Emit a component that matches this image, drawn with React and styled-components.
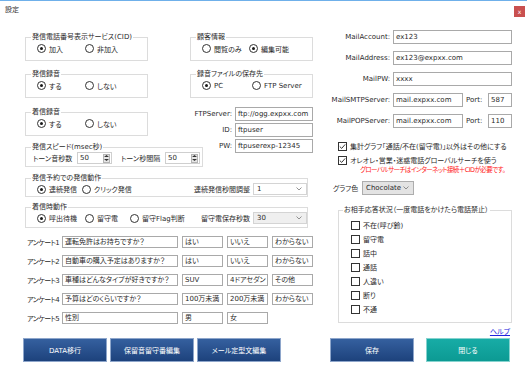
import React from 'react';
import styled, { createGlobalStyle } from 'styled-components';

const GlobalStyle = createGlobalStyle`
  html, body { margin: 0; padding: 0; background: #fff; }
  body {
    font-family: "DejaVu Sans", "Noto Sans CJK JP", sans-serif;
    font-size: 7px;
    color: #2a2a2a;
    font-feature-settings: "palt";
  }
  * { box-sizing: border-box; }
`;

const Window = styled.div`
  width: 527px;
  height: 371px;
  border-top: 1px solid #6fb0ea;
  background: #fff;
  overflow: hidden;
  display: flex;
  flex-direction: column;
`;

const TitleBar = styled.div`
  height: 28px;
  display: flex;
  justify-content: space-between;
  align-items: flex-start;
  padding: 4px 2px 0 5px;
  flex: none;
`;

const Title = styled.span`
  line-height: 10px;
  color: #333;
`;

const CloseBtn = styled.button`
  width: 11px;
  height: 11px;
  margin-top: 1px;
  padding: 0;
  border: none;
  background: #c9504f;
  color: #fff;
  font-family: "DejaVu Sans", sans-serif;
  font-size: 6px;
  line-height: 11px;
`;

const Body = styled.div`
  display: flex;
  padding-left: 25px;
`;

const LeftArea = styled.div`
  width: 288px;
  display: flex;
  flex-direction: column;
  flex: none;
`;

const TopGrid = styled.div`
  display: grid;
  grid-template-columns: 123px 123px;
  column-gap: 42px;
  margin-top: 3px;
  align-items: start;
`;

const Column = styled.div`
  display: flex;
  flex-direction: column;
`;

const Group = styled.fieldset`
  margin: ${p => p.$mt || 0}px 0 0 ${p => p.$ml || 0}px;
  padding: ${p => p.$pt || 0}px ${p => p.$pr || 0}px ${p => p.$pb ?? 5}px 0;
  border: 1px solid #dcdcdc;
  width: ${p => p.$w}px;
  min-width: 0;
`;

const Legend = styled.legend`
  padding: 0 1px;
  margin-left: ${p => p.$ml ?? 5}px;
  line-height: 10px;
  white-space: nowrap;
`;

const GroupRow = styled.div`
  display: flex;
  align-items: center;
  height: ${p => p.$h || 13}px;
  padding-left: ${p => p.$pl ?? 11}px;
  white-space: nowrap;
`;

const RadioItem = styled.label`
  display: inline-flex;
  align-items: center;
  gap: 3px;
  flex: none;
  width: ${p => (p.$w ? `${p.$w}px` : 'auto')};
  white-space: nowrap;
`;

const RadioCircle = styled.span`
  width: 9px;
  height: 9px;
  border: 1px solid #333;
  border-radius: 50%;
  background: #fff;
  display: inline-flex;
  align-items: center;
  justify-content: center;
  flex: none;
  &::after {
    content: '';
    width: 3px;
    height: 3px;
    border-radius: 50%;
    background: #1a1a1a;
    display: ${p => (p.$on ? 'block' : 'none')};
  }
`;

const Radio = ({ on, w, children }) => (
  <RadioItem $w={w}>
    <RadioCircle $on={on} />
    <span>{children}</span>
  </RadioItem>
);

const InlineLabel = styled.span`
  width: ${p => p.$w}px;
  flex: none;
  white-space: nowrap;
  padding-left: ${p => p.$pl || 0}px;
`;

const SpinBox = styled.div`
  width: 35px;
  height: 12px;
  border: 1px solid #cfcfcf;
  display: flex;
  align-items: center;
  justify-content: space-between;
  padding: 0 1px 0 2px;
  flex: none;
  line-height: 10px;
`;

const SpinBtns = styled.span`
  width: 7px;
  height: 9px;
  background: #e6e6e6;
  border: 1px solid #b4b4b4;
  display: flex;
  flex-direction: column;
  align-items: center;
  justify-content: space-around;
`;

const Spin = ({ value }) => (
  <SpinBox>
    <span>{value}</span>
    <SpinBtns>
      <svg width="5" height="2" viewBox="0 0 5 2"><path d="M0 2 L2.5 0 L5 2 Z" fill="#333" /></svg>
      <svg width="5" height="2" viewBox="0 0 5 2"><path d="M0 0 L2.5 2 L5 0 Z" fill="#333" /></svg>
    </SpinBtns>
  </SpinBox>
);

const ComboBox = styled.div`
  width: ${p => p.$w || 54}px;
  height: ${p => p.$h || 13}px;
  border: 1px solid ${p => (p.$tone === 'dark' ? '#adadad' : '#d4d4d4')};
  background: ${p => (p.$tone === 'dark' ? '#e3e3e3' : p.$tone === 'light' ? '#efefef' : '#fff')};
  display: flex;
  align-items: center;
  justify-content: space-between;
  padding: 0 4px 0 3px;
  flex: none;
  line-height: 10px;
`;

const Combo = ({ value, w, h, tone }) => (
  <ComboBox $w={w} $h={h} $tone={tone}>
    <span>{value}</span>
    <svg width="6" height="4" viewBox="0 0 6 4"><path d="M0.5 0.5 L3 3 L5.5 0.5" stroke="#777" strokeWidth="0.8" fill="none" /></svg>
  </ComboBox>
);

const PushRight = styled.div`
  margin-left: auto;
  display: flex;
  align-items: center;
  gap: 3px;
`;

const Field = styled.div`
  width: ${p => p.$w}px;
  height: ${p => p.$h || 12}px;
  border: 1px solid #a9a9a9;
  background: #fff;
  padding: 0 2px;
  line-height: ${p => (p.$h || 12) - 2}px;
  white-space: nowrap;
  overflow: hidden;
  flex: none;
`;

const FormStack = styled.div`
  display: flex;
  flex-direction: column;
  gap: ${p => p.$gap}px;
  margin-top: ${p => p.$mt || 0}px;
`;

const FormRow = styled.div`
  display: flex;
  align-items: center;
  gap: 3px;
  height: ${p => p.$h || 14}px;
`;

const FieldLabel = styled.span`
  width: ${p => p.$w}px;
  flex: none;
  white-space: nowrap;
  display: flex;
  justify-content: flex-end;
`;

const SurveyStack = styled.div`
  display: flex;
  flex-direction: column;
  gap: 7px;
  margin-top: 8px;
`;

const SurveyRow = styled.div`
  display: flex;
  align-items: center;
  gap: 4px;
  height: 12px;
`;

const SurveyLabel = styled.span`
  width: 33px;
  padding-left: 2px;
  white-space: nowrap;
  letter-spacing: -0.6px;
  flex: none;
`;

const ButtonRow = styled.div`
  display: flex;
  gap: ${p => p.$gap}px;
  margin-top: ${p => p.$mt}px;
  margin-left: ${p => p.$ml}px;
`;

const Button = styled.button`
  width: 84px;
  height: 24px;
  padding: 0;
  border: 1px solid ${p => (p.$teal ? '#86d3cf' : '#8ea6cb')};
  background: ${p => (p.$teal
    ? 'linear-gradient(#17aca6, #0c9a93)'
    : 'linear-gradient(#35609f, #1d427c)')};
  color: #fff;
  font: inherit;
  font-size: 7px;
`;

const RightArea = styled.div`
  width: 184px;
  margin-left: 15px;
  margin-top: 1px;
  display: flex;
  flex-direction: column;
  flex: none;
`;

const CheckRow = styled.label`
  display: flex;
  align-items: center;
  gap: 3px;
  height: ${p => p.$h || 12}px;
  margin-top: ${p => p.$mt || 0}px;
  padding-left: ${p => p.$pl || 0}px;
  white-space: nowrap;
`;

const CheckSquare = styled.span`
  width: 9px;
  height: 9px;
  border: 1px solid #333;
  background: #fff;
  display: inline-flex;
  align-items: center;
  justify-content: center;
  flex: none;
`;

const Check = ({ on, children, ...rest }) => (
  <CheckRow {...rest}>
    <CheckSquare>
      {on && (
        <svg width="7" height="7" viewBox="0 0 7 7">
          <path d="M0.8 3.6 L2.7 5.4 L6.2 1.4" stroke="#222" strokeWidth="0.9" fill="none" />
        </svg>
      )}
    </CheckSquare>
    <span>{children}</span>
  </CheckRow>
);

const Note = styled.div`
  color: #ff1a1a;
  padding-left: 32px;
  font-size: 6.5px;
  letter-spacing: -0.55px;
  line-height: 9px;
  height: 9px;
  white-space: nowrap;
`;

const GraphRow = styled.div`
  display: flex;
  align-items: center;
  gap: 3px;
  height: 14px;
  margin-top: 6px;
  padding-left: 5px;
`;

const HelpLink = styled.a`
  align-self: flex-end;
  margin-top: 4px;
  margin-right: 2px;
  line-height: 10px;
  height: 10px;
  color: #2222dd;
  text-decoration: underline;
`;

const surveys = [
  ['アンケート1', '運転免許はお持ちですか？', ['はい', 'いいえ', 'わからない']],
  ['アンケート2', '自動車の購入予定はありますか？', ['はい', 'いいえ', 'わからない']],
  ['アンケート3', '車種はどんなタイプが好きですか？', ['SUV', '4ドアセダン', 'その他']],
  ['アンケート4', '予算はどのくらいですか？', ['100万未満', '200万未満', 'わからない']],
  ['アンケート5', '性別', ['男', '女']],
];

const responses = ['不在(呼び鈴)', '留守電', '話中', '通話', '人違い', '断り', '不通'];

export default function App() {
  return (
    <>
      <GlobalStyle />
      <Window>
        <TitleBar>
          <Title>設定</Title>
          <CloseBtn>x</CloseBtn>
        </TitleBar>
        <Body>
          <LeftArea>
            <TopGrid>
              <Column>
                <Group $w={123}>
                  <Legend>発信電話番号表示サービス(CID)</Legend>
                  <GroupRow>
                    <Radio on w={48}>加入</Radio>
                    <Radio>非加入</Radio>
                  </GroupRow>
                </Group>
                <Group $w={123} $mt={8}>
                  <Legend>発信録音</Legend>
                  <GroupRow>
                    <Radio on w={48}>する</Radio>
                    <Radio>しない</Radio>
                  </GroupRow>
                </Group>
                <Group $w={123} $mt={9}>
                  <Legend>着信録音</Legend>
                  <GroupRow>
                    <Radio on w={48}>する</Radio>
                    <Radio>しない</Radio>
                  </GroupRow>
                </Group>
                <Group $w={178} $mt={6} $pb={2}>
                  <Legend>発信スピード(msec秒)</Legend>
                  <GroupRow $h={12} $pl={7}>
                    <InlineLabel $w={44}>トーン音秒数</InlineLabel>
                    <Spin value="50" />
                    <InlineLabel $w={53} $pl={9}>トーン秒間隔</InlineLabel>
                    <Spin value="50" />
                  </GroupRow>
                </Group>
              </Column>
              <Column>
                <Group $w={123}>
                  <Legend>顧客情報</Legend>
                  <GroupRow>
                    <Radio w={47}>閲覧のみ</Radio>
                    <Radio on>編集可能</Radio>
                  </GroupRow>
                </Group>
                <Group $w={123} $mt={8}>
                  <Legend>録音ファイルの保存先</Legend>
                  <GroupRow>
                    <Radio on w={50}>PC</Radio>
                    <Radio>FTP Server</Radio>
                  </GroupRow>
                </Group>
                <FormStack $gap={2} $mt={9}>
                  <FormRow>
                    <FieldLabel $w={42}>FTPServer:</FieldLabel>
                    <Field $w={78} $h={14}>ftp://ogg.expxx.com</Field>
                  </FormRow>
                  <FormRow>
                    <FieldLabel $w={42}>ID:</FieldLabel>
                    <Field $w={78} $h={14}>ftpuser</Field>
                  </FormRow>
                  <FormRow>
                    <FieldLabel $w={42}>PW:</FieldLabel>
                    <Field $w={78} $h={14}>ftpuserexp-12345</Field>
                  </FormRow>
                </FormStack>
              </Column>
            </TopGrid>

            <Group $w={283} $mt={6} $pb={1}>
              <Legend>発信予約での発信動作</Legend>
              <GroupRow $h={12}>
                <Radio on w={45}>連続発信</Radio>
                <Radio>クリック発信</Radio>
                <PushRight>
                  <span>連続発信秒間調整</span>
                  <Combo value="1" w={54} h={12} />
                </PushRight>
              </GroupRow>
            </Group>

            <Group $w={283} $mt={5} $pb={3}>
              <Legend>着信時動作</Legend>
              <GroupRow $h={12}>
                <Radio on w={48}>呼出待機</Radio>
                <Radio w={45}>留守電</Radio>
                <Radio>留守Flag判断</Radio>
                <PushRight>
                  <span>留守電保存秒数</span>
                  <Combo value="30" w={54} h={12} tone="light" />
                </PushRight>
              </GroupRow>
            </Group>

            <SurveyStack>
              {surveys.map(([label, q, answers]) => (
                <SurveyRow key={label}>
                  <SurveyLabel>{label}</SurveyLabel>
                  <Field $w={116}>{q}</Field>
                  {answers.map(a => (
                    <Field key={a} $w={41}>{a}</Field>
                  ))}
                </SurveyRow>
              ))}
            </SurveyStack>

            <ButtonRow $gap={3} $mt={14} $ml={-2}>
              <Button>DATA移行</Button>
              <Button>保留音留守番編集</Button>
              <Button>メール定型文編集</Button>
            </ButtonRow>
          </LeftArea>

          <RightArea>
            <FormStack $gap={7}>
              <FormRow>
                <FieldLabel $w={62}>MailAccount:</FieldLabel>
                <Field $w={119} $h={14}>ex123</Field>
              </FormRow>
              <FormRow>
                <FieldLabel $w={62}>MailAddress:</FieldLabel>
                <Field $w={119} $h={14}>ex123@expxx.com</Field>
              </FormRow>
              <FormRow>
                <FieldLabel $w={62}>MailPW:</FieldLabel>
                <Field $w={119} $h={14}>xxxx</Field>
              </FormRow>
              <FormRow>
                <FieldLabel $w={62}>MailSMTPServer:</FieldLabel>
                <Field $w={70} $h={14}>mail.expxx.com</Field>
                <InlineLabel $w={19}>Port:</InlineLabel>
                <Field $w={24} $h={14}>587</Field>
              </FormRow>
              <FormRow>
                <FieldLabel $w={62}>MailPOPServer:</FieldLabel>
                <Field $w={70} $h={14}>mail.expxx.com</Field>
                <InlineLabel $w={19}>Port:</InlineLabel>
                <Field $w={24} $h={14}>110</Field>
              </FormRow>
            </FormStack>

            <Check on $mt={12} $pl={10}>集計グラフ「通話/不在(留守電)」以外はその他にする</Check>
            <Check on $mt={2} $pl={10}>オレオレ・営業・迷惑電話グローバルサーチを使う</Check>
            <Note>グローバルサーチはインターネット接続＋CIDが必要です。</Note>

            <GraphRow>
              <InlineLabel $w={26}>グラフ色</InlineLabel>
              <Combo value="Chocolate" w={52} h={14} tone="dark" />
            </GraphRow>

            <Group $w={174} $mt={10} $ml={10} $pt={3} $pb={6}>
              <Legend $ml={4}>お相手応答状況（一度電話をかけたら電話禁止）</Legend>
              {responses.map(r => (
                <Check key={r} $h={14} $pl={12}>{r}</Check>
              ))}
            </Group>

            <HelpLink href="#">ヘルプ</HelpLink>

            <ButtonRow $gap={12} $mt={1} $ml={2}>
              <Button>保存</Button>
              <Button $teal>閉じる</Button>
            </ButtonRow>
          </RightArea>
        </Body>
      </Window>
    </>
  );
}
